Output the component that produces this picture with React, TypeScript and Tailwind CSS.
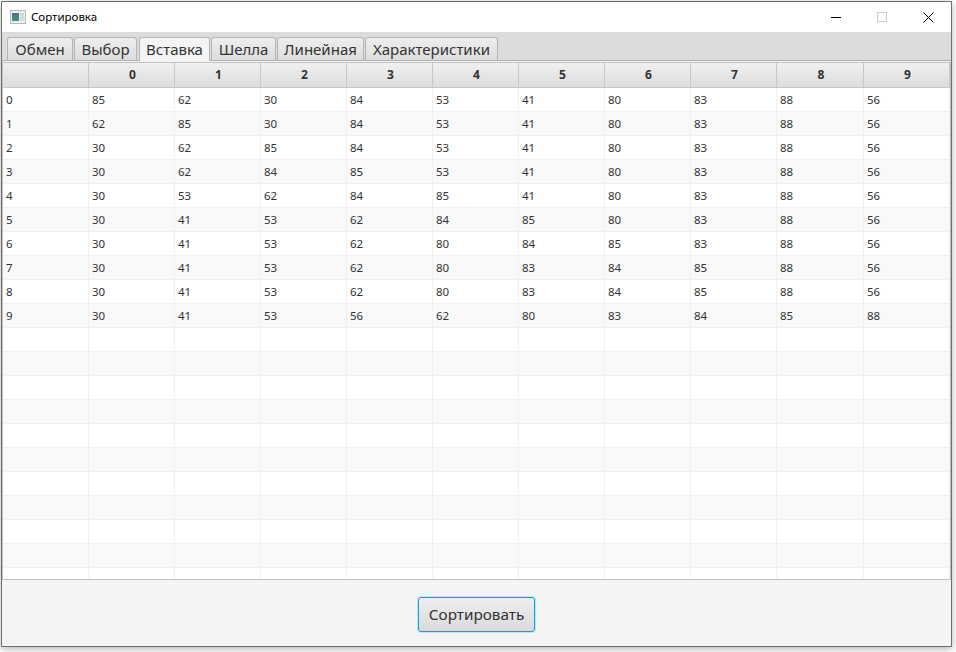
import React from "react";

const rows = [
  [85, 62, 30, 84, 53, 41, 80, 83, 88, 56],
  [62, 85, 30, 84, 53, 41, 80, 83, 88, 56],
  [30, 62, 85, 84, 53, 41, 80, 83, 88, 56],
  [30, 62, 84, 85, 53, 41, 80, 83, 88, 56],
  [30, 53, 62, 84, 85, 41, 80, 83, 88, 56],
  [30, 41, 53, 62, 84, 85, 80, 83, 88, 56],
  [30, 41, 53, 62, 80, 84, 85, 83, 88, 56],
  [30, 41, 53, 62, 80, 83, 84, 85, 88, 56],
  [30, 41, 53, 62, 80, 83, 84, 85, 88, 56],
  [30, 41, 53, 56, 62, 80, 83, 84, 85, 88],
];
const widths = [86, 86, 86, 86, 86, 86, 86, 86, 86, 87, 86];
const tabs = [
  { t: "Обмен", c: "w-[66px]" },
  { t: "Выбор", c: "w-[63px] ml-px" },
  { t: "Вставка", c: "w-[71px] ml-[2px]" },
  { t: "Шелла", c: "w-[65px] ml-px" },
  { t: "Линейная", c: "w-[87px] ml-px" },
  { t: "Характеристики", c: "w-[133px] ml-px" },
];

export default function App() {
  const allRows: (number[] | null)[] = [...rows, ...Array(11).fill(null)];
  return (
    <div className="w-[956px] h-[652px] bg-white overflow-hidden pt-px pl-px font-['Noto_Sans','Open_Sans',sans-serif]">
      <div className="w-[951px] h-[646px] border border-[#6e6e6e] bg-[#f4f4f4] flex flex-col shadow-[0_2px_8px_rgba(0,0,0,0.3)]">
        <div className="h-[30px] bg-white flex items-center shrink-0">
          <svg width="16" height="14" viewBox="0 0 16 14" className="ml-2 -mt-px">
            <defs>
              <linearGradient id="ico" x1="0" y1="0" x2="0" y2="1">
                <stop offset="0" stopColor="#4a6f88" />
                <stop offset="1" stopColor="#3f9a7a" />
              </linearGradient>
            </defs>
            <rect x="0.5" y="0.5" width="15" height="13" fill="#eef0f0" stroke="#b4baba" />
            <rect x="2" y="3" width="7" height="8" fill="url(#ico)" />
            <rect x="10" y="3" width="4" height="8" fill="#d4dada" />
          </svg>
          <span className="ml-[5px] text-[11.5px] text-black leading-none">Сортировка</span>
          <div className="ml-auto flex items-center">
            <div className="w-[46px] h-[30px] flex items-center justify-center">
              <div className="w-[10px] h-px bg-black" />
            </div>
            <div className="w-[46px] h-[30px] flex items-center justify-center">
              <div className="w-[10px] h-[10px] border border-[#cccccc]" />
            </div>
            <div className="w-[46px] h-[30px] flex items-center justify-center">
              <svg width="11" height="11" viewBox="0 0 11 11">
                <path d="M0.5 0.5L10.5 10.5M10.5 0.5L0.5 10.5" stroke="#000" strokeWidth="1" fill="none" />
              </svg>
            </div>
          </div>
        </div>
        <div className="h-[29px] shrink-0 bg-[#dcdcdc] border-b border-[#b0b0b0] flex items-end pl-[5px]">
          {tabs.map(({ t, c }) =>
            t === "Вставка" ? (
              <div key={t} className={`h-[24px] -mb-px rounded-t-[3px] border border-b-0 border-[#b5b5b5] bg-[#f4f4f4] text-[15px] text-[#333] flex items-center justify-center leading-none relative ${c}`}>
                {t}
              </div>
            ) : (
              <div key={t} className={`h-[23px] rounded-t-[3px] border border-b-0 border-[#b5b5b5] bg-gradient-to-b from-[#eeeeee] to-[#dddddd] text-[15px] text-[#333] flex items-center justify-center leading-none ${c}`}>
                {t}
              </div>
            )
          )}
        </div>
        <div className="h-[518px] mt-px shrink-0 border border-[#c2c2c2] bg-white overflow-hidden">
          <div className="flex h-[25px] bg-gradient-to-b from-[#f0f0f0] to-[#dcdcdc] border-b border-[#c8c8c8]">
            {widths.map((w, i) => (
              <div key={i} style={{ width: w }} className="shrink-0 border-r border-[#c8c8c8] flex items-center justify-center pl-[2px] text-[12px] font-bold text-[#333]">
                {i === 0 ? "" : i - 1}
              </div>
            ))}
          </div>
          {allRows.map((r, ri) => (
            <div key={ri} className={`flex h-[24px] border-b border-[#f0f0f0] ${ri % 2 ? "bg-[#f9f9f9]" : "bg-white"}`}>
              {widths.map((w, i) => (
                <div key={i} style={{ width: w }} className="shrink-0 border-r border-[#f0f0f0] flex items-center pl-[3px] pt-px text-[11.5px] text-[#333]">
                  {r ? (i === 0 ? ri : r[i - 1]) : ""}
                </div>
              ))}
            </div>
          ))}
        </div>
        <div className="flex-1 flex items-center justify-center pt-[3px]">
          <button className="w-[117px] h-[35px] rounded-[3px] border border-[#0ea0dc] shadow-[0_0_0_1px_#bfe4f5] bg-gradient-to-b from-[#eeeeee] to-[#dadada] text-[15.3px] text-[#333] leading-none">
            Сортировать
          </button>
        </div>
      </div>
    </div>
  );
}
